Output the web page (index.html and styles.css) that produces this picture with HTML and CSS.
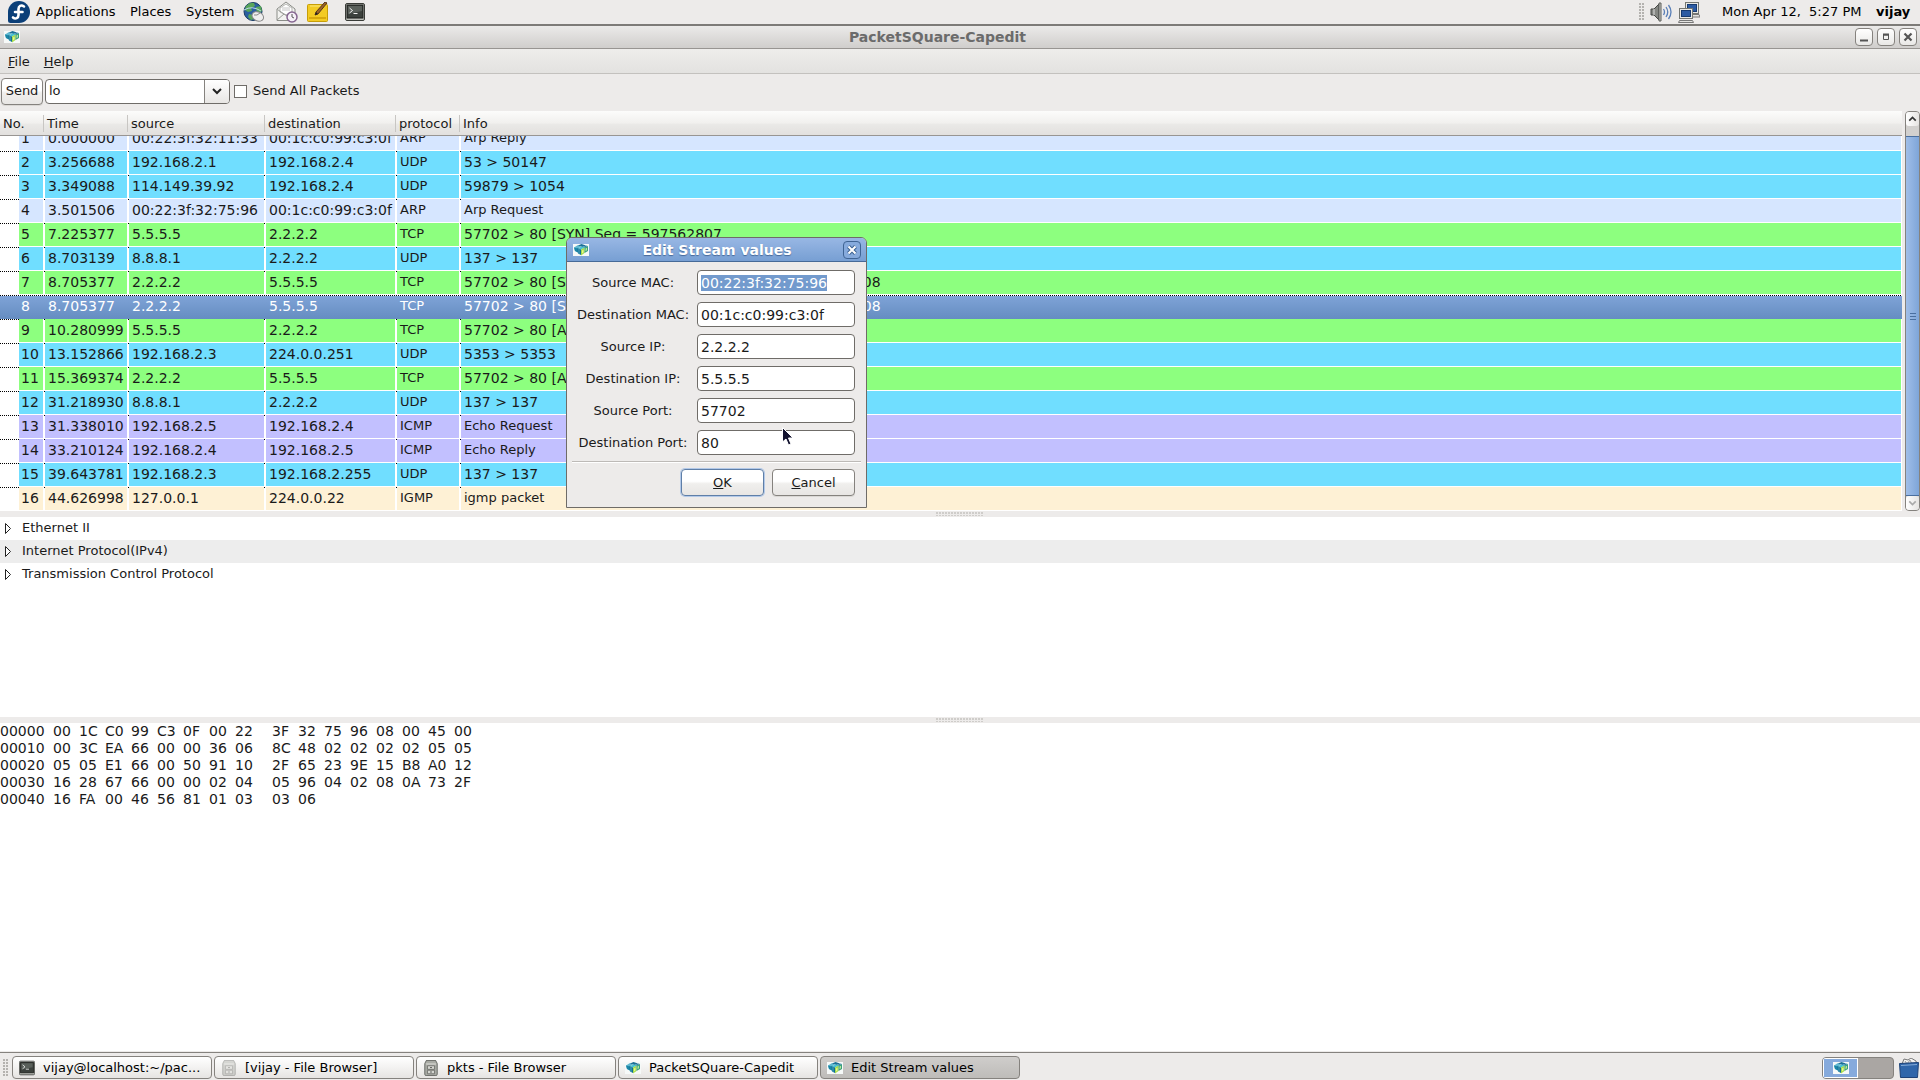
FILE: index.html
```html
<!DOCTYPE html>
<html lang="en">
<head>
<meta charset="utf-8">
<title>PacketSQuare-Capedit</title>
<link rel="stylesheet" href="styles.css">
</head>
<body>
<svg class="defs" aria-hidden="true">
  <symbol id="app" viewBox="0 0 16 12">
    <rect width="16" height="12" fill="#f6f9f8"/>
    <path d="M1 3.500L5 1l3 1-3 2.500v4L2 7z" fill="#5fb7cf"/>
    <path d="M1 3.500l4 1v4L2 7z" fill="#1b86a6"/>
    <path d="M5 1.500L8.500 0 13 1.500 9.500 3z" fill="#1c6f96"/>
    <path d="M4.500 4L9 2.500l3 1L8 5.500z" fill="#49c3d3"/>
    <path d="M4.500 4L8 5.500v5.500L5 9.500z" fill="#0f6c92"/>
    <path d="M6 5v5" stroke="#7fd3e0" stroke-width=".6"/>
    <path d="M8 5.500l3.500-2V9L8 11.500z" fill="#a5dc4c"/>
    <path d="M9 6.500l1.500-.8v2.500L9 9.500z" fill="#eaf78c"/>
    <path d="M11.500 3.500L15 2v5l-3.500 2z" fill="#3aa07c"/>
    <path d="M12.500 4.500l1.500-.8v2.500l-1.500 1z" fill="#b8e69a"/>
    <path d="M10 3l3-1.500 2 .5-3.500 1.500z" fill="#2a7fa6"/>
  </symbol>
  <symbol id="term" viewBox="0 0 20 18">
    <rect x=".5" y=".5" width="19" height="17" rx="1.5" fill="#bdbfb9" stroke="#3a3c38"/>
    <rect x="2" y="2" width="16" height="13" fill="#3c413d" stroke="#1d1f1c"/>
    <path d="M3 3h14v5L3 11z" fill="#5a605b"/>
    <path d="M4.500 5l3 2.500-3 2.500M8.500 10.500h4" fill="none" stroke="#f2f2f2"/>
  </symbol>
  <symbol id="cab" viewBox="0 0 16 18">
    <path d="M2 2q0-1.500 1.500-1.500h9Q14 .5 14 2l1 2v12q0 1.500-1.500 1.500h-11Q1 17.500 1 16V4z" fill="#a9aba5" stroke="#5f615c"/>
    <path d="M2.500 4.500h11" stroke="#e6e6e2"/>
    <path d="M4 6.500h8v4H4zM4 11.500h8v4H4z" fill="#d5d6d1" stroke="#6d6f6a"/>
    <path d="M7 8.500h2M7 13.500h2" stroke="#40423e"/>
  </symbol>
</svg>

<header class="panel top">
  <nav class="launch" aria-label="Desktop">
    <svg class="fedora" viewBox="0 0 22 22" aria-hidden="true"><path d="M11 0a11 11 0 1 1 0 22H2.500A2.500 2.500 0 0 1 0 19.500V11A11 11 0 0 1 11 0z" fill="#0b3f78"/><path d="M16 5.500c-3-2-5.500-.5-5.500 2.500v6c0 3-3 4.500-5.500 2.500M7 11h7.500" fill="none" stroke="#fff" stroke-width="2.600" stroke-linecap="round"/></svg>
    <button class="m1">Applications</button>
    <button class="m2">Places</button>
    <button class="m3">System</button>
    <svg class="globe" viewBox="0 0 22 20" aria-hidden="true"><circle cx="10" cy="9.500" r="9" fill="#2a5f9f" stroke="#183a62"/><path d="M3 4q4-4 8-3l1 3-4 2 1 3-4 1-3-2zM13 5l5-1 1 5-3 2-3-3zM6 12l4 1 1 4-3 1-3-3z" fill="#58a55a"/><path d="M1 8q8-5 17 1" fill="none" stroke="#bcd9ee"/><ellipse cx="15" cy="14.500" rx="6" ry="4.500" transform="rotate(25 15 14)" fill="#eee" stroke="#888"/><path d="M11 13q3 1 6-2" fill="none" stroke="#888"/></svg>
    <svg class="mail" viewBox="0 0 22 22" aria-hidden="true"><path d="M1 8l9-7 9 7v11.500H1z" fill="#f3f3f1" stroke="#8b8d88"/><path d="M4 7l6-4 6 4v4l-6 3-6-3z" fill="#fff" stroke="#b5b5b2"/><path d="M1 19l7-6 3 2M1.500 8.500L8 13" fill="none" stroke="#9a9c97"/><path d="M6 7h8M6 9h8" stroke="#c6c6c6"/><circle cx="16" cy="16" r="5" fill="#f5f0f7" stroke="#856590" stroke-width="1.500"/><path d="M16 13v3l2 1" fill="none" stroke="#555"/></svg>
    <svg class="note" viewBox="0 0 22 20" aria-hidden="true"><rect x=".5" y="2.500" width="20" height="17" rx="1" fill="#f3cb24" stroke="#c79e08"/><path d="M2 16h17" stroke="#d9a90d" stroke-width="2"/><path d="M3 4h15" stroke="#fbe77a"/><path d="M20 1L11 12l-3 1 1-3L18 0z" fill="#9b642a" stroke="#57351a"/><path d="M8 13l1-3 2 2z" fill="#222"/></svg>
    <svg class="term" aria-hidden="true"><use href="#term"/></svg>
  </nav>
  <div class="tray">
    <span class="grip"></span>
    <svg class="speaker" viewBox="0 0 22 20" aria-hidden="true"><path d="M1 7h3l5-5v16l-5-5H1z" fill="#858783" stroke="#454744"/><path d="M9 1h2v18H9z" fill="#c8c9c5" stroke="#5a5c58"/><path d="M4 7v6" stroke="#ddd"/><path d="M13.500 7q2 3 0 6M16 5q3.500 5 0 10M18.500 3q5 7 0 14" fill="none" stroke="#5b80b8" stroke-width="1.300"/></svg>
    <svg class="net" viewBox="0 0 22 21" aria-hidden="true"><rect x="7.500" y=".5" width="13" height="11" fill="#e8e8e5" stroke="#757772"/><rect x="9.500" y="2.500" width="9" height="7" fill="#2c5ba3" stroke="#163a70"/><path d="M12 12.500h9l1 2.500H12z" fill="#e3e3e0" stroke="#777"/><rect x="1.500" y="6.500" width="13" height="10" fill="#e8e8e5" stroke="#757772"/><rect x="3.500" y="8.500" width="9" height="6" fill="#2c5ba3" stroke="#163a70"/><path d="M1.500 18.500h13l1 2H.5z" fill="#e3e3e0" stroke="#777"/></svg>
    <time>Mon Apr 12,&nbsp; 5:27 PM</time>
    <strong>vijay</strong>
  </div>
</header>

<main class="window">
  <div class="titlebar">
    <svg class="appicon" aria-hidden="true"><use href="#app"/></svg>
    <h1>PacketSQuare-Capedit</h1>
    <div class="winbtns">
      <button aria-label="Minimize"><svg viewBox="0 0 16 16"><path d="M4 11.500h8" stroke="#555" stroke-width="2"/></svg></button>
      <button aria-label="Maximize"><svg viewBox="0 0 16 16"><path d="M5.500 6h5v4.500h-5z" fill="none" stroke="#555"/><path d="M5 5.500h6" stroke="#555" stroke-width="2"/></svg></button>
      <button aria-label="Close"><svg viewBox="0 0 16 16"><path d="M4.500 4.500l7 7M11.500 4.500l-7 7" stroke="#555" stroke-width="2.200"/></svg></button>
    </div>
  </div>
  <nav class="menubar" aria-label="Menu"><button><u>F</u>ile</button><button><u>H</u>elp</button></nav>
  <form class="toolbar">
    <button type="button" class="btn send">Send</button>
    <div class="combo">
      <input type="text" aria-label="Interface" value="lo">
      <button type="button" aria-label="Show interfaces"><svg viewBox="0 0 12 8"><path d="M2 2l4 4 4-4" fill="none" stroke="#222" stroke-width="2"/></svg></button>
    </div>
    <input type="checkbox" id="all"><label for="all">Send All Packets</label>
  </form>

  <section class="packets">
    <div class="list" id="list">
      <table>
        <colgroup><col class="c0"><col class="c1"><col class="c2"><col class="c3"><col class="c4"><col class="c5"><col></colgroup>
        <thead><tr><th colspan="2">No.</th><th>Time</th><th>source</th><th>destination</th><th>protocol</th><th>Info</th></tr></thead>
        <tbody>
          <tr class="arp"><td></td><td>1</td><td>0.000000</td><td>00:22:3f:32:11:33</td><td>00:1c:c0:99:c3:0f</td><td>ARP</td><td class="words">Arp Reply</td></tr>
          <tr class="udp"><td></td><td>2</td><td>3.256688</td><td>192.168.2.1</td><td>192.168.2.4</td><td>UDP</td><td>53 &gt; 50147</td></tr>
          <tr class="udp"><td></td><td>3</td><td>3.349088</td><td>114.149.39.92</td><td>192.168.2.4</td><td>UDP</td><td>59879 &gt; 1054</td></tr>
          <tr class="arp"><td></td><td>4</td><td>3.501506</td><td>00:22:3f:32:75:96</td><td>00:1c:c0:99:c3:0f</td><td>ARP</td><td class="words">Arp Request</td></tr>
          <tr class="tcp"><td></td><td>5</td><td>7.225377</td><td>5.5.5.5</td><td>2.2.2.2</td><td>TCP</td><td>57702 &gt; 80 [SYN] Seq = 597562807</td></tr>
          <tr class="udp"><td></td><td>6</td><td>8.703139</td><td>8.8.8.1</td><td>2.2.2.2</td><td>UDP</td><td>137 &gt; 137</td></tr>
          <tr class="tcp"><td></td><td>7</td><td>8.705377</td><td>2.2.2.2</td><td>5.5.5.5</td><td>TCP</td><td>57702 &gt; 80 [SYN,ACK] Seq= 2433756005 Ack=597562808</td></tr>
          <tr class="selected"><td></td><td>8</td><td>8.705377</td><td>2.2.2.2</td><td>5.5.5.5</td><td>TCP</td><td>57702 &gt; 80 [SYN,ACK] Seq= 2433756005 Ack=597562808</td></tr>
          <tr class="tcp"><td></td><td>9</td><td>10.280999</td><td>5.5.5.5</td><td>2.2.2.2</td><td>TCP</td><td>57702 &gt; 80 [ACK] Seq = 597562808</td></tr>
          <tr class="udp"><td></td><td>10</td><td>13.152866</td><td>192.168.2.3</td><td>224.0.0.251</td><td>UDP</td><td>5353 &gt; 5353</td></tr>
          <tr class="tcp"><td></td><td>11</td><td>15.369374</td><td>2.2.2.2</td><td>5.5.5.5</td><td>TCP</td><td>57702 &gt; 80 [ACK] Seq = 597562808</td></tr>
          <tr class="udp"><td></td><td>12</td><td>31.218930</td><td>8.8.8.1</td><td>2.2.2.2</td><td>UDP</td><td>137 &gt; 137</td></tr>
          <tr class="icmp"><td></td><td>13</td><td>31.338010</td><td>192.168.2.5</td><td>192.168.2.4</td><td>ICMP</td><td class="words">Echo Request</td></tr>
          <tr class="icmp"><td></td><td>14</td><td>33.210124</td><td>192.168.2.4</td><td>192.168.2.5</td><td>ICMP</td><td class="words">Echo Reply</td></tr>
          <tr class="udp"><td></td><td>15</td><td>39.643781</td><td>192.168.2.3</td><td>192.168.2.255</td><td>UDP</td><td>137 &gt; 137</td></tr>
          <tr class="igmp"><td></td><td>16</td><td>44.626998</td><td>127.0.0.1</td><td>224.0.0.22</td><td>IGMP</td><td class="words">igmp packet</td></tr>
        </tbody>
      </table>
    </div>
    <div class="scroller" aria-hidden="true">
      <span class="arrow"><svg viewBox="0 0 12 12"><path d="M3 8l3-3 3 3" fill="none" stroke="#333" stroke-width="1.500"/></svg></span>
      <span class="thumb"><i></i><i></i><i></i></span>
      <span class="arrow"><svg viewBox="0 0 12 12"><path d="M3 5l3 3 3-3" fill="none" stroke="#aaa" stroke-width="1.500"/></svg></span>
    </div>
  </section>
  <div class="sash"><span></span></div>
  <ul class="tree">
    <li><svg viewBox="0 0 8 13"><path d="M1.500 1.500v10l5-5z" fill="#fff" stroke="#222"/></svg>Ethernet II</li>
    <li><svg viewBox="0 0 8 13"><path d="M1.500 1.500v10l5-5z" fill="#fff" stroke="#222"/></svg>Internet Protocol(IPv4)</li>
    <li><svg viewBox="0 0 8 13"><path d="M1.500 1.500v10l5-5z" fill="#fff" stroke="#222"/></svg>Transmission Control Protocol</li>
  </ul>
  <div class="sash"><span></span></div>
  <section class="hex">
    <table>
      <tr><th>00000</th><td>00</td><td>1C</td><td>C0</td><td>99</td><td>C3</td><td>0F</td><td>00</td><td class="half">22</td><td>3F</td><td>32</td><td>75</td><td>96</td><td>08</td><td>00</td><td>45</td><td>00</td></tr>
      <tr><th>00010</th><td>00</td><td>3C</td><td>EA</td><td>66</td><td>00</td><td>00</td><td>36</td><td class="half">06</td><td>8C</td><td>48</td><td>02</td><td>02</td><td>02</td><td>02</td><td>05</td><td>05</td></tr>
      <tr><th>00020</th><td>05</td><td>05</td><td>E1</td><td>66</td><td>00</td><td>50</td><td>91</td><td class="half">10</td><td>2F</td><td>65</td><td>23</td><td>9E</td><td>15</td><td>B8</td><td>A0</td><td>12</td></tr>
      <tr><th>00030</th><td>16</td><td>28</td><td>67</td><td>66</td><td>00</td><td>00</td><td>02</td><td class="half">04</td><td>05</td><td>96</td><td>04</td><td>02</td><td>08</td><td>0A</td><td>73</td><td>2F</td></tr>
      <tr><th>00040</th><td>16</td><td>FA</td><td>00</td><td>46</td><td>56</td><td>81</td><td>01</td><td class="half">03</td><td>03</td><td>06</td></tr>
    </table>
  </section>
</main>

<footer class="panel bottom">
  <span class="grip"></span>
  <nav class="tasks" aria-label="Windows">
    <button><svg class="i16" aria-hidden="true"><use href="#term"/></svg>vijay@localhost:~/pac...</button>
    <button><svg class="i16 dim" aria-hidden="true"><use href="#cab"/></svg>[vijay - File Browser]</button>
    <button><svg class="i16" aria-hidden="true"><use href="#cab"/></svg>pkts - File Browser</button>
    <button><svg class="i16" aria-hidden="true"><use href="#app"/></svg>PacketSQuare-Capedit</button>
    <button class="active"><svg class="i16" aria-hidden="true"><use href="#app"/></svg>Edit Stream values</button>
  </nav>
  <div class="pager"><span class="here"><svg class="appicon" aria-hidden="true"><use href="#app"/></svg></span></div>
  <svg class="trash" viewBox="0 0 20 20" aria-hidden="true"><path d="M3 6l2-5 4 1 3-2 5 3 1 4z" fill="#f4f4f2" stroke="#777"/><path d="M6 3l2 3 3-4 2 4" fill="none" stroke="#999"/><path d="M.5 5.500l19-1-1 15h-17z" fill="#2f66aa" stroke="#1d4277"/><path d="M2 7.500l16-1" stroke="#84abd8"/></svg>
</footer>

<form class="dialog" role="dialog" aria-labelledby="dt">
  <div class="dtitle">
    <svg class="appicon" aria-hidden="true"><use href="#app"/></svg>
    <h2 id="dt">Edit Stream values</h2>
    <button type="button" aria-label="Close"><svg viewBox="0 0 16 16"><path d="M4.500 4.500l7 7M11.500 4.500l-7 7" stroke="#3c6190" stroke-width="4"/><path d="M4.500 4.500l7 7M11.500 4.500l-7 7" stroke="#fff" stroke-width="2"/></svg></button>
  </div>
  <div class="fields">
    <label for="smac">Source MAC:</label><input type="text" id="smac" value="00:22:3f:32:75:96">
    <label for="dmac">Destination MAC:</label><input type="text" id="dmac" value="00:1c:c0:99:c3:0f">
    <label for="sip">Source IP:</label><input type="text" id="sip" value="2.2.2.2">
    <label for="dip">Destination IP:</label><input type="text" id="dip" value="5.5.5.5">
    <label for="sport">Source Port:</label><input type="text" id="sport" value="57702">
    <label for="dport">Destination Port:</label><input type="text" id="dport" value="80">
  </div>
  <div class="actions">
    <button type="button" class="btn default"><span><u>O</u>K</span></button>
    <button type="button" class="btn"><span><u>C</u>ancel</span></button>
  </div>
</form>
<svg class="cursor" viewBox="0 0 12 19" aria-hidden="true"><path d="M.5 .5v14.500l3.500-3 2.500 6 2.500-1-2.500-6H11z" fill="#12122e" stroke="#fff"/></svg>
<script src="main.js"></script>
</body>
</html>
```
FILE: styles.css
```css
* { box-sizing: border-box; }
html, body { height: 100%; margin: 0; }
body {
  display: flex; flex-direction: column; overflow: hidden;
  background: #edebea; color: #1a1a1a;
  font: 13px/16px "DejaVu Sans", Verdana, sans-serif;
}
button, input { font: inherit; color: inherit; margin: 0; padding: 0; border: 0; background: none; }
svg { display: block; flex: none; }
h1, h2 { margin: 0; font-size: 14px; line-height: 16px; }
.defs { position: absolute; width: 0; height: 0; }

/* desktop panels */
.panel { display: flex; align-items: center; flex: none; background: #edebea; color: #000; }
.top { height: 26px; justify-content: space-between; border-bottom: 2px solid #7d7b78; padding: 0 7px 0 8px; }
.launch, .tray { display: flex; align-items: center; }
.fedora { width: 22px; height: 22px; margin-right: 6px; }
.launch .m1 { width: 94px; text-align: left; }
.launch .m2 { width: 56px; text-align: left; }
.launch .m3 { width: 57px; text-align: left; }
.globe { width: 22px; height: 20px; margin-right: 11px; }
.mail { width: 22px; height: 22px; margin-right: 9px; }
.note { width: 22px; height: 20px; margin-right: 16px; }
.term { width: 20px; height: 18px; }
.grip { width: 5px; height: 18px; background: radial-gradient(circle at 1px 1px, #b4b2af 1px, transparent 1px) 0 0 / 3px 3px; }
.tray .grip { margin-right: 6px; }
.speaker { width: 22px; height: 20px; margin-right: 6px; }
.net { width: 22px; height: 21px; margin-right: 22px; }
.tray time { width: 154px; }
.tray strong { width: 37px; }

/* main window */
.window { flex: 1; min-height: 0; display: flex; flex-direction: column; }
.titlebar {
  display: grid; grid-template-columns: 16px 1fr 62px; align-items: center; flex: none;
  height: 23px; padding: 0 3px 0 4px;
  background: linear-gradient(#ebeae9, #d0cecc); border-bottom: 1px solid #989592;
}
.appicon { width: 16px; height: 12px; }
.titlebar h1 { text-align: center; color: #6b6b6b; }
.winbtns { display: flex; gap: 4px; justify-content: flex-end; }
.winbtns button { width: 18px; height: 18px; border: 1px solid #85827e; border-radius: 4px; background: linear-gradient(#fff, #e9e8e6); }
.menubar { display: flex; align-items: center; gap: 14px; flex: none; height: 25px; padding: 2px 0 0 8px; background: linear-gradient(#eeedeb, #e3e2e0); border-bottom: 1px solid #c3c1be; }
.toolbar { display: flex; align-items: center; flex: none; height: 37px; padding-bottom: 3px; padding-left: 1px; }
.btn { border: 1px solid #85827e; border-radius: 4px; background: linear-gradient(#fff 45%, #f0efed 55%, #e8e6e4); box-shadow: 0 1px 0 #dad8d5; }
.send { width: 42px; height: 27px; margin-right: 2px; }
.combo { display: flex; width: 185px; height: 25px; margin-right: 4px; border: 1px solid #6f6c68; border-radius: 4px; background: #fff; }
.combo input { flex: 1; min-width: 0; padding-left: 3px; outline: 0; }
.combo button { width: 25px; border-left: 1px solid #85827e; border-radius: 0 3px 3px 0; background: linear-gradient(#fff, #e8e6e4); }
.combo svg { width: 12px; height: 8px; margin: auto; }
.toolbar input[type="checkbox"] { appearance: none; width: 13px; height: 13px; margin-right: 6px; border: 1px solid #6f6c68; background: #fff; }

/* packet list */
.packets { display: flex; gap: 3px; flex: none; height: 400px; }
.list { flex: 1; min-width: 0; overflow: hidden; background: #fff; }
.list table { width: 100%; table-layout: fixed; border-collapse: separate; border-spacing: 0; }
.c0 { width: 18px; }
.c1 { width: 26px; }
.c2 { width: 84px; }
.c3 { width: 137px; }
.c4 { width: 131px; }
.c5 { width: 64px; }
.list th {
  position: sticky; top: 0; z-index: 1; height: 25px; padding: 1px 3px 0; text-align: left; font-weight: 400;
  background: linear-gradient(#c8c6c3, #c8c6c3) 100% 4px / 1px 17px no-repeat, linear-gradient(#fcfcfb, #f1f0ee 50%, #eae9e7 55%, #e2e0de);
  border-bottom: 1px solid #989592;
}
.list th:last-child { background: linear-gradient(#fcfcfb, #f1f0ee 50%, #eae9e7 55%, #e2e0de); }
.list tbody tr { background: repeating-linear-gradient(90deg, #000 0 1px, #fff 1px 2px) 0 0 / 100% 1px no-repeat #fff; }
.list td {
  height: 24px; padding: 0 3px 2px; font-size: 14px; line-height: 16px; white-space: nowrap; overflow: hidden;
  border: solid transparent; border-width: 0 1px 1px; background-clip: padding-box;
}
.list td:first-child { padding: 0; background: none; }
.list td:nth-child(2) { padding: 0 2px 2px; }
.list td:nth-child(6), .list td.words { font-size: 13px; }
.arp td { background-color: #d6e6ff; }
.udp td { background-color: #70deff; }
.tcp td { background-color: #8dff7f; }
.icmp td { background-color: #c2c0ff; }
.igmp td { background-color: #fef1d5; }
.list tbody .selected { background: repeating-linear-gradient(90deg, #000 0 1px, #fff 1px 2px) 0 0 / 100% 1px no-repeat, linear-gradient(#80a4d8, #658dc1); color: #fff; }
.scroller { display: flex; flex-direction: column; width: 15px; border: 1px solid #85827e; border-radius: 4px; background: #d2d0ce; }
.arrow { height: 14px; border-radius: 3px; background: linear-gradient(90deg, #fff, #e6e4e2); }
.arrow svg { width: 13px; height: 13px; }
.thumb {
  flex: 1; margin-top: 10px; display: flex; flex-direction: column; justify-content: center; align-items: center; gap: 2px;
  border: solid #4a6f9f; border-width: 1px 0; background: linear-gradient(90deg, #a0bee8, #7ea5d8);
}
.thumb i { width: 6px; height: 1px; background: #4a6f9f; }
.sash { flex: none; height: 6px; display: flex; justify-content: center; align-items: center; }
.sash span { width: 48px; height: 4px; background: radial-gradient(circle at 1px 1px, #cfcdca 1px, transparent 1px) 0 0 / 3px 3px; }

/* protocol tree and hex dump */
.tree { flex: none; height: 200px; margin: 0; padding: 0; list-style: none; background: #fff; }
.tree li { display: flex; align-items: center; height: 23px; padding: 0 0 1px 4px; gap: 10px; }
.tree li:nth-child(2) { background: #ededed; }
.tree svg { width: 8px; height: 13px; }
.hex { flex: 1; min-height: 0; background: #fff; }
.hex table { border-spacing: 0; font-size: 14px; line-height: 17px; }
.hex th { width: 53px; padding: 0; font-weight: 400; text-align: left; }
.hex td { min-width: 26px; padding: 0; }
.hex .half { min-width: 37px; }

/* task bar */
.bottom { height: 28px; margin-top: 1px; padding: 2px 1px 0 3px; border-top: 1px solid #85827e; }
.tasks { display: flex; gap: 2px; margin: 0 auto 0 4px; }
.tasks button {
  display: flex; align-items: center; gap: 8px; width: 200px; height: 23px; padding-left: 6px;
  border: 1px solid #85827e; border-radius: 4px; background: linear-gradient(#fff, #f3f2f1 50%, #e6e4e2);
}
.tasks .active { background: linear-gradient(#cfcdcb, #bebcb9); }
.i16 { width: 16px; height: 16px; }
.dim { opacity: .45; }
.pager { width: 72px; height: 22px; margin-right: 5px; border: 1px solid #85827e; border-radius: 4px; overflow: hidden; background: #aaa6a3; }
.here { display: flex; align-items: center; justify-content: center; width: 35px; height: 20px; border: 1px solid #fff; background: #86aadc; }
.trash { width: 20px; height: 20px; }

/* dialog floats over the window */
.dialog { position: absolute; left: 566px; top: 237px; width: 301px; border: 1px solid #6f6c68; border-radius: 6px 6px 0 0; background: #edebea; z-index: 2; }
.dtitle {
  display: grid; grid-template-columns: 20px 1fr 20px; align-items: center; height: 24px; padding: 0 5px 0 6px;
  border-radius: 5px 5px 0 0; background: linear-gradient(#98b7e4, #779fd3); border-bottom: 1px solid #466a98;
}
.dtitle h2 { text-align: center; color: #fff; text-shadow: 0 1px 1px #47699a; }
.dtitle button { width: 18px; height: 18px; justify-self: end; border: 1px solid #3f6494; border-radius: 4px; background: #86aadc; }
.fields {
  display: grid; grid-template-columns: 114px 158px; gap: 7px; justify-content: end; align-items: center;
  margin: 0 5px; padding: 8px 6px 6px 0; border-bottom: 1px solid #bdbab7; box-shadow: 0 1px 0 #fff;
}
.fields label { text-align: center; white-space: nowrap; }
.fields input { height: 25px; padding: 0 3px; border: 1px solid #6f6c68; border-radius: 4px; background: #fff; font-size: 14px; outline: 0; caret-color: transparent; }
.fields input::selection { background: #729acd; color: #fff; }
.actions { display: flex; justify-content: flex-end; gap: 8px; padding: 7px 11px 11px; }
.actions .btn { width: 83px; height: 27px; }
.actions .default { border-color: #5f7fa8; box-shadow: 0 0 0 1px #b3c9e8; }
.cursor { position: absolute; left: 782px; top: 427px; width: 12px; height: 19px; z-index: 3; }
```
FILE: main.js
```js
// Start with the packet list scrolled to its end and the first field selected.
const list = document.getElementById('list');
list.scrollTop = list.scrollHeight;
document.getElementById('smac').select();
```
